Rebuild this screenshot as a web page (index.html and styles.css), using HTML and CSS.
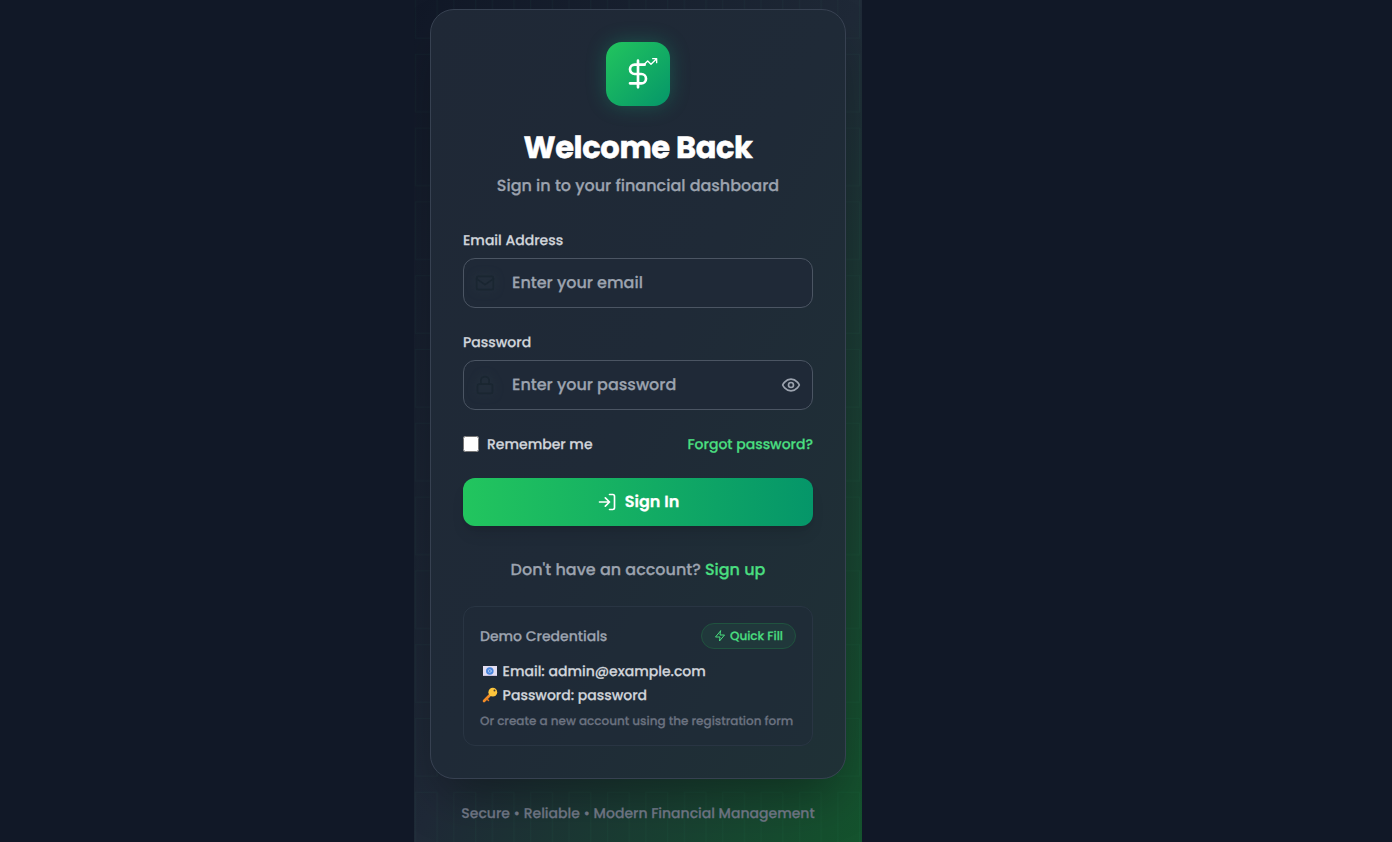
FILE: index.html
```html
<!DOCTYPE html>
<html lang="en">
<head>
<meta charset="utf-8">
<title>Sign in</title>
<link rel="stylesheet" href="styles.css">
</head>
<body>
<main class="screen">
  <svg class="grid" width="448" height="842">
    <defs><pattern id="boxes" x="0.9" y="-20" width="38.4" height="73.8" patternUnits="userSpaceOnUse"><rect x="0.5" y="0.5" width="21.800" height="57.500"/></pattern></defs>
    <path fill="url(#boxes)" stroke="none" d="M0 0h448v842H0z"/>
  </svg>
  <section class="card">
    <div class="logo">
      <svg class="logo-dollar" viewBox="0 0 24 24"><path d="M12 2v20M17 5H9.500a3.500 3.500 0 0 0 0 7h5a3.500 3.500 0 0 1 0 7H6"/></svg>
      <svg class="logo-trend" viewBox="0 0 24 24"><path d="M22 7l-8.500 8.500-5-5L2 17M16 7h6v6"/></svg>
    </div>
    <h1 class="title">Welcome Back</h1>
    <p class="subtitle">Sign in to your financial dashboard</p>
    <form class="form">
      <div class="field">
        <label class="label" for="email">Email Address</label>
        <div class="control">
          <svg class="lead" viewBox="0 0 24 24"><rect x="2" y="4" width="20" height="16" rx="2"/><path d="M22 7l-10 7L2 7"/></svg>
          <input class="input" id="email" type="email" placeholder="Enter your email">
        </div>
      </div>
      <div class="field">
        <label class="label" for="password">Password</label>
        <div class="control">
          <svg class="lead" viewBox="0 0 24 24"><rect x="3" y="11" width="18" height="11" rx="2"/><path d="M7 11V7a5 5 0 0 1 10 0v4"/></svg>
          <input class="input" id="password" type="password" placeholder="Enter your password">
          <svg class="eye" viewBox="0 0 24 24"><path d="M2 12s3-7 10-7 10 7 10 7-3 7-10 7-10-7-10-7z"/><circle cx="12" cy="12" r="3"/></svg>
        </div>
      </div>
      <div class="options">
        <label class="remember"><input class="check" type="checkbox"><span>Remember me</span></label>
        <a class="forgot">Forgot password?</a>
      </div>
      <button class="submit" type="button">
        <svg viewBox="0 0 24 24"><path d="M15 3h4a2 2 0 0 1 2 2v14a2 2 0 0 1-2 2h-4M10 17l5-5-5-5M15 12H3"/></svg>
        <span class="submit-text">Sign In</span>
      </button>
    </form>
    <p class="signup"><span>Don't have an account?</span><a class="join">Sign up</a></p>
    <div class="demo">
      <div class="demo-head">
        <span>Demo Credentials</span>
        <span class="quick"><svg viewBox="0 0 24 24"><path d="M13 2L3 14h9l-1 8 10-12h-9l1-8z"/></svg><span class="quick-text">Quick Fill</span></span>
      </div>
      <p class="cred">
        <svg class="emoji" viewBox="0 0 16 16"><path fill="#e4dff2" d="M1 3h14v10H1z"/><path fill="#c8c1dd" d="M1 12h14v1H1z"/><circle cx="7.800" cy="8" r="3.800" fill="#4b86dc"/><circle cx="7.800" cy="8" r="1.500" fill="none" stroke="#b5d0f4" stroke-width=".7"/></svg>
        <span>Email: admin@example.com</span>
      </p>
      <p class="cred">
        <svg class="emoji" viewBox="0 0 16 16"><path d="M9 7L2 14" stroke="#f28c28" stroke-width="2.600" stroke-linecap="round"/><path d="M5 12l1.500 1.500" stroke="#e87b20" stroke-width="1.500"/><circle cx="10.800" cy="5.200" r="4.400" fill="#fdc53c"/><circle cx="12.500" cy="3.600" r="1" fill="#4b4030"/></svg>
        <span>Password: password</span>
      </p>
      <p class="hint">Or create a new account using the registration form</p>
    </div>
  </section>
  <footer class="foot">Secure • Reliable • Modern Financial Management</footer>
</main>
</body>
</html>
```
FILE: styles.css
```css
* { box-sizing: border-box; }
body {
  margin: 0;
  height: 842px;
  overflow: hidden;
  background: #111827;
  font-family: Poppins, Inter, "Open Sans", sans-serif;
  font-weight: 500;
  text-rendering: geometricPrecision;
  -webkit-text-stroke: .25px;
}
h1, p { margin: 0; white-space: nowrap; }
span, a, label { white-space: nowrap; }
svg { fill: none; stroke: currentColor; stroke-width: 2; stroke-linecap: round; stroke-linejoin: round; flex: none; }
.screen {
  position: relative;
  isolation: isolate;
  overflow: hidden;
  width: 448px;
  height: 842px;
  margin-left: 414px;
  padding: 9px 16px 0;
  background: linear-gradient(to bottom right, #111827 0%, #1f2937 50%, #14532d 100%);
}
.grid { position: absolute; inset: 0; z-index: -1; color: rgba(52, 211, 153, .03); stroke-width: 1; }
.card {
  height: 770px;
  padding: 32px;
  border: 1px solid #374151;
  border-radius: 24px;
  background: linear-gradient(to bottom right, #1f2836 0%, #1f2a37 50%, #1f3136 100%);
  box-shadow: 0 25px 50px -12px rgba(0, 0, 0, .35);
}
.logo {
  position: relative;
  display: flex;
  align-items: center;
  justify-content: center;
  width: 64px;
  height: 64px;
  margin: 0 auto;
  border-radius: 16px;
  background: linear-gradient(135deg, #22c55e, #059669);
  box-shadow: 0 0 20px rgba(16, 185, 129, .3);
  color: #fff;
}
.logo-dollar { width: 32px; height: 32px; }
.logo-trend { position: absolute; top: 12px; right: 12px; width: 16px; height: 16px; }
.title { height: 40px; margin-top: 22px; line-height: 39px; text-align: center; font-size: 30.5px; letter-spacing: -.35px; font-weight: 700; color: #fff; -webkit-text-stroke: .5px; }
.subtitle { height: 24px; margin-top: 6px; line-height: 24px; text-align: center; font-size: 16px; color: #9ca3af; }
.form { margin-top: 32px; }
.field { height: 78px; margin-bottom: 24px; }
.label { display: block; height: 20px; margin-bottom: 8px; line-height: 20px; font-size: 14px; color: #d1d5db; }
.control { position: relative; display: flex; align-items: center; }
.input {
  width: 350px;
  height: 50px;
  padding: 0 48px 2px;
  border: 1px solid #4b5563;
  border-radius: 12px;
  background: #1f2937;
  font: inherit;
  font-size: 16px;
  text-rendering: inherit;
  color: #fff;
}
.input::placeholder { color: #9ca3af; opacity: 1; }
.lead { position: absolute; left: 12px; width: 20px; height: 20px; color: #1a2631; filter: drop-shadow(0 0 4px #2a3843); }
.eye { position: absolute; right: 12px; width: 20px; height: 20px; color: #9ca3af; }
.options { display: flex; align-items: center; justify-content: space-between; height: 20px; font-size: 14px; color: #d1d5db; }
.remember { display: flex; align-items: center; gap: 8px; }
.check { width: 16px; height: 16px; margin: 0; }
.forgot, .join { color: #4ade80; }
.submit {
  display: flex;
  align-items: center;
  justify-content: center;
  gap: 8px;
  width: 100%;
  height: 48px;
  margin-top: 24px;
  padding: 0;
  border: 0;
  border-radius: 12px;
  background: linear-gradient(90deg, #22c55e, #059669);
  box-shadow: 0 10px 15px -3px rgba(0, 0, 0, .1), 0 4px 6px -4px rgba(0, 0, 0, .1);
  font: inherit;
  font-size: 16px;
  font-weight: 600;
  text-rendering: inherit;
  color: #fff;
}
.submit svg { width: 20px; height: 20px; }
.submit-text { padding-bottom: 2px; }
.signup { display: flex; justify-content: center; gap: 4px; margin-top: 32px; line-height: 24px; font-size: 16px; color: #9ca3af; }
.demo { height: 140px; margin-top: 24px; padding: 16px; border: 1px solid #293543; border-radius: 12px; background: rgba(31, 41, 55, .5); }
.demo-head { display: flex; align-items: center; justify-content: space-between; height: 26px; margin-bottom: 10px; font-size: 14px; color: #9ca3af; }
.quick { display: flex; align-items: center; justify-content: center; gap: 4px; width: 95px; height: 26px; border: 1px solid #20533f; border-radius: 13px; background: #20383b; font-size: 12px; color: #4ade80; }
.quick svg { width: 12px; height: 12px; }
.quick-text { padding-top: 2px; line-height: 16px; }
.cred { display: flex; align-items: center; gap: 4.6px; height: 24px; padding-left: 2px; font-size: 14px; color: #d1d5db; }
.emoji { width: 16px; height: 16px; stroke: none; }
.hint { margin-top: 7px; line-height: 16px; font-size: 12px; color: #6b7280; }
.foot { margin-top: 24px; line-height: 20px; text-align: center; font-size: 14px; color: #6b7280; }
```
